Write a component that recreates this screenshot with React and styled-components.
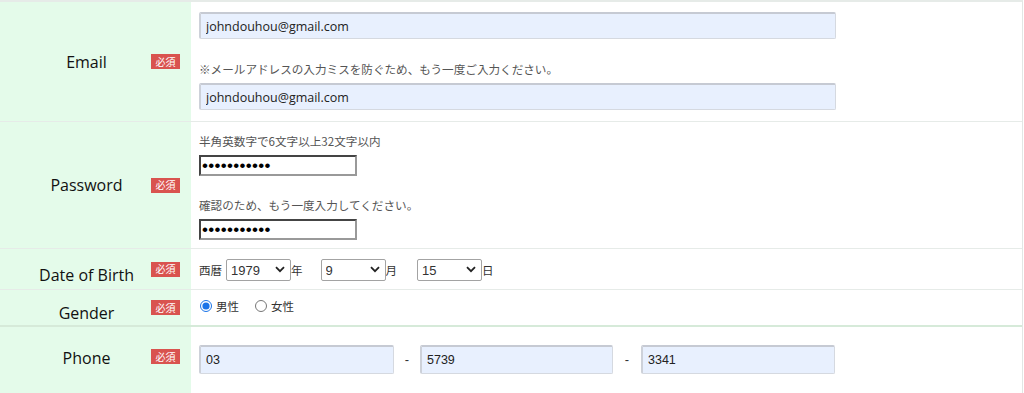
import React from "react";
import styled, { createGlobalStyle } from "styled-components";

const Global = createGlobalStyle`
  html, body { margin: 0; padding: 0; background: #fff; }
  body { font-family: "Open Sans", "Noto Sans CJK JP", sans-serif; color: #222; }
  * { box-sizing: border-box; }
`;

const Table = styled.div`
  width: 1023px;
  border-top: 2px solid #e6ebe8;
  border-right: 1px solid #e2e6e4;
  display: flex;
  flex-direction: column;
`;

const Row = styled.div`
  display: grid;
  grid-template-columns: 191px 1fr;
  border-bottom: ${(p) => p.$strong ? "2px solid #d6ead9" : "1px solid #e6ebe8"};
  min-height: ${(p) => p.$minHeight || 0}px;
`;

const LabelCell = styled.div`
  background: #e4fbea;
  display: flex;
  align-items: center;
  padding: 0 11px 0 22px;
`;

const LabelText = styled.div`
  flex: 1;
  text-align: center;
  font-size: 16px;
  line-height: 20px;
  color: #111;
  transform: translateY(${(p) => p.$shift || 0}px);
`;

const Badge = styled.span`
  display: inline-flex;
  align-items: center;
  justify-content: center;
  width: 29px;
  height: 15px;
  background: #d9534f;
  color: #fff;
  font-family: "Noto Sans CJK JP", sans-serif;
  font-size: 10px;
  line-height: 1;
  transform: translateY(${(p) => p.$shift || 0}px);
`;

const ValueCell = styled.div`
  padding: ${(p) => p.$pad || "10px 8px"};
  display: flex;
  flex-direction: column;
  align-items: flex-start;
`;

const TextInput = styled.input`
  width: ${(p) => p.$w || 637}px;
  height: ${(p) => p.$h || 27}px;
  background: #e8f0fe;
  border: 1px solid #d5d9e0;
  border-top: 2px solid #c6cad3;
  border-left: 2px solid #cdd1d9;
  border-radius: 2px;
  padding: 0 0 0 5px;
  font-family: ${(p) => p.$mono ? `"Liberation Sans", sans-serif` : `"Open Sans", sans-serif`};
  font-size: 12.5px;
  color: #222;
  outline: none;
`;

const Note = styled.div`
  font-family: "Noto Sans CJK JP", sans-serif;
  font-size: 11.6px;
  line-height: 18px;
  color: #555;
  margin: ${(p) => p.$m || "0"};
`;

const PassInput = styled.input`
  width: 158px;
  height: 21px;
  border-top: 2px solid #444;
  border-left: 2px solid #444;
  border-right: 2px solid #999;
  border-bottom: 2px solid #999;
  background: #fff;
  padding: 0 1px;
  font-family: "Liberation Sans", sans-serif;
  font-size: 17px;
  letter-spacing: 0.3px;
  color: #000;
  outline: none;
`;

const Inline = styled.div`
  display: flex;
  align-items: center;
  font-family: "Noto Sans CJK JP", sans-serif;
  font-size: 11.5px;
  color: #333;
`;

const Unit = styled.span`
  margin-right: ${(p) => p.$mr || 0}px;
`;

const SelectWrap = styled.div`
  position: relative;
  width: 65px;
  height: 22px;
`;

const Select = styled.select`
  appearance: none;
  -webkit-appearance: none;
  width: 100%;
  height: 100%;
  border: 1px solid #a3a3a3;
  border-radius: 2px;
  background: #fff;
  padding: 0 0 0 4px;
  font-family: "Liberation Sans", sans-serif;
  font-size: 13px;
  color: #333;
  outline: none;
`;

const Chevron = styled.svg`
  position: absolute;
  right: 6px;
  top: 7px;
  width: 10px;
  height: 7px;
  pointer-events: none;
`;

const RadioGroup = styled.div`
  display: flex;
  align-items: center;
  font-family: "Noto Sans CJK JP", sans-serif;
  font-size: 11.5px;
  color: #333;
  height: 20px;
`;

const Radio = styled.input`
  margin: 0 4px 0 0;
  width: 12px;
  height: 12px;
  accent-color: #1a73e8;
`;

const RadioLabel = styled.label`
  display: inline-flex;
  align-items: center;
  margin-right: ${(p) => p.$mr || 0}px;
  padding-left: 1px;
`;

const PhoneRow = styled.div`
  display: flex;
  align-items: center;
`;

const Dash = styled.span`
  width: ${(p) => p.$w || 27}px;
  text-align: center;
  font-family: "Liberation Sans", sans-serif;
  font-size: 13px;
  color: #333;
`;

const DateSelect = ({ value, options }) => (
  <SelectWrap>
    <Select defaultValue={value}>
      {options.map((o) => (
        <option key={o} value={o}>{o}</option>
      ))}
    </Select>
    <Chevron viewBox="0 0 10 7">
      <path d="M1 1.2 L5 5.2 L9 1.2" fill="none" stroke="#222" strokeWidth="1.8" />
    </Chevron>
  </SelectWrap>
);

const years = Array.from({ length: 80 }, (_, i) => String(1940 + i));
const months = Array.from({ length: 12 }, (_, i) => String(i + 1));
const days = Array.from({ length: 31 }, (_, i) => String(i + 1));

export default function App() {
  return (
    <>
      <Global />
      <Table>
        <Row>
          <LabelCell>
            <LabelText>Email</LabelText>
            <Badge>必須</Badge>
          </LabelCell>
          <ValueCell $pad="10px 8px 11px 8px">
            <TextInput defaultValue="johndouhou@gmail.com" />
            <Note $m="21px 0 5px">※メールアドレスの入力ミスを防ぐため、もう一度ご入力ください。</Note>
            <TextInput defaultValue="johndouhou@gmail.com" />
          </ValueCell>
        </Row>
        <Row>
          <LabelCell>
            <LabelText>Password</LabelText>
            <Badge>必須</Badge>
          </LabelCell>
          <ValueCell $pad="10px 8px 8px 8px">
            <Note $m="0 0 5px">半角英数字で6文字以上32文字以内</Note>
            <PassInput type="password" defaultValue="abcdefghijk" />
            <Note $m="20px 0 5px">確認のため、もう一度入力してください。</Note>
            <PassInput type="password" defaultValue="abcdefghijk" />
          </ValueCell>
        </Row>
        <Row>
          <LabelCell>
            <LabelText $shift={6}>Date of Birth</LabelText>
            <Badge>必須</Badge>
          </LabelCell>
          <ValueCell $pad="10px 8px 8px 8px">
            <Inline>
              <Unit $mr={4}>西暦</Unit>
              <DateSelect value="1979" options={years} />
              <Unit $mr={18}>年</Unit>
              <DateSelect value="9" options={months} />
              <Unit $mr={20}>月</Unit>
              <DateSelect value="15" options={days} />
              <Unit>日</Unit>
            </Inline>
          </ValueCell>
        </Row>
        <Row $strong>
          <LabelCell>
            <LabelText $shift={5}>Gender</LabelText>
            <Badge>必須</Badge>
          </LabelCell>
          <ValueCell $pad="6px 8px 9px 8px">
            <RadioGroup>
              <RadioLabel $mr={15}>
                <Radio type="radio" name="gender" defaultChecked />
                男性
              </RadioLabel>
              <RadioLabel>
                <Radio type="radio" name="gender" />
                女性
              </RadioLabel>
            </RadioGroup>
          </ValueCell>
        </Row>
        <Row $minHeight={70}>
          <LabelCell>
            <LabelText $shift={-4}>Phone</LabelText>
            <Badge $shift={-5}>必須</Badge>
          </LabelCell>
          <ValueCell $pad="18px 8px 20px 8px">
            <PhoneRow>
              <TextInput $w={195} $h={29} $mono defaultValue="03" />
              <Dash $w={26}>-</Dash>
              <TextInput $w={193} $h={29} $mono defaultValue="5739" />
              <Dash $w={28}>-</Dash>
              <TextInput $w={194} $h={29} $mono defaultValue="3341" />
            </PhoneRow>
          </ValueCell>
        </Row>
      </Table>
    </>
  );
}
